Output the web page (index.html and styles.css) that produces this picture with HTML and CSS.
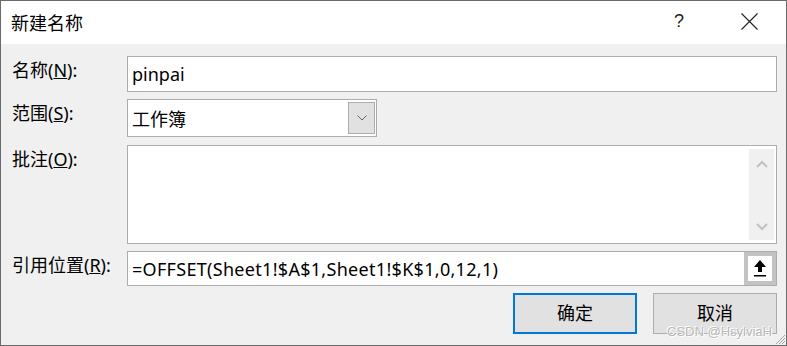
FILE: index.html
```html
<!DOCTYPE html>
<html lang="zh-CN">
<head>
    <meta charset="UTF-8">
    <title>新建名称</title>
    <link rel="stylesheet" href="styles.css">
</head>
<body>
    <div class="dialog">
        <div class="title-bar">
            <span class="title">新建名称</span>
            <span class="help">?</span>
            <span class="close">
                <svg width="17" height="17" viewBox="0 0 17 17"><path d="M0.5 0.5 L16.5 16.5 M16.5 0.5 L0.5 16.5" stroke="#222" stroke-width="1.1" fill="none"/></svg>
            </span>
        </div>

        <div class="content">
            <div class="row row-name">
                <label class="label">名称(<u>N</u>):</label>
                <div class="field">
                    <span class="value">pinpai</span>
                </div>
            </div>

            <div class="row row-scope">
                <label class="label">范围(<u>S</u>):</label>
                <div class="field select">
                    <span class="value">工作簿</span>
                    <span class="drop-btn">
                        <svg width="10" height="6" viewBox="0 0 10 6"><path d="M0.5 0.5 L5 5 L9.5 0.5" stroke="#666" stroke-width="1" fill="none"/></svg>
                    </span>
                </div>
            </div>

            <div class="row row-comment">
                <label class="label">批注(<u>O</u>):</label>
                <div class="field memo">
                    <span class="value"></span>
                    <div class="scrollbar">
                        <svg width="12" height="8" viewBox="0 0 12 8"><path d="M1 7 L6 2 L11 7" stroke="#c2c2c2" stroke-width="2" fill="none"/></svg>
                        <svg width="12" height="8" viewBox="0 0 12 8"><path d="M1 1 L6 6 L11 1" stroke="#c2c2c2" stroke-width="2" fill="none"/></svg>
                    </div>
                </div>
            </div>

            <div class="row row-ref">
                <label class="label">引用位置(<u>R</u>):</label>
                <div class="field ref">
                    <span class="value">=OFFSET(Sheet1!$A$1,Sheet1!$K$1,0,12,1)</span>
                    <span class="collapse-btn">
                        <svg width="14" height="18" viewBox="0 0 14 18">
                            <path d="M7 0 L13 7 L9 7 L9 12 L5 12 L5 7 L1 7 Z" fill="#000"/>
                            <rect x="1" y="15" width="12" height="1.5" fill="#000"/>
                        </svg>
                    </span>
                </div>
            </div>

            <div class="buttons">
                <button class="btn btn-default">确定</button>
                <button class="btn">取消</button>
            </div>
        </div>

        <span class="watermark">CSDN @HsylviaH</span>
        <svg class="grip" width="12" height="12" viewBox="0 0 12 12">
            <path d="M11 2 L2 11 M11 5 L5 11 M11 8 L8 11" stroke="#a8a8a8" stroke-width="1" fill="none"/>
        </svg>
    </div>
</body>
</html>
```

FILE: styles.css
```css
body {
    margin: 0;
    font-family: "Noto Sans", "Noto Sans CJK SC", sans-serif;
    background-color: #f0f0f0;
    color: #000;
}

.dialog {
    position: relative;
    width: 787px;
    height: 346px;
    box-sizing: border-box;
    border: 1px solid #6a6a6a;
    background-color: #f0f0f0;
    overflow: hidden;
}

.title-bar {
    height: 43px;
    background: #fff;
    display: flex;
    align-items: center;
    padding: 0 28px 0 10px;
}

.title {
    font-size: 18px;
    flex: 1;
    padding-bottom: 2px;
}

.help {
    font-size: 18px;
    font-family: "Liberation Sans", sans-serif;
    color: #222;
    margin-right: 57px;
    padding-bottom: 2px;
}

.close {
    display: flex;
    margin-bottom: 2px;
}

.content {
    padding: 12px 9px 0 11px;
    display: flex;
    flex-direction: column;
    gap: 7px;
}

.row {
    display: flex;
    align-items: flex-start;
}

.label {
    width: 115px;
    font-size: 18px;
    line-height: 22px;
    padding-top: 3px;
}

.field {
    flex: 1;
    background: #fff;
    border: 1px solid #adadad;
    display: flex;
    align-items: center;
    box-sizing: border-box;
}

.value {
    flex: 1;
    font-size: 18px;
    padding-left: 4px;
    white-space: nowrap;
}

.row-name .field {
    height: 36px;
}

.select {
    flex: 0 0 250px;
    height: 38px;
    padding: 2px 1px 2px 0;
    align-items: stretch;
}

.select .value {
    display: flex;
    align-items: center;
}

.drop-btn {
    width: 25px;
    background: #e1e1e1;
    border: 1px solid #adadad;
    display: flex;
    align-items: center;
    justify-content: center;
}

.row-comment {
    margin-top: 1px;
}

.memo {
    height: 99px;
    padding: 3px 2px 3px 0;
    align-items: stretch;
}

.scrollbar {
    width: 25px;
    background: #f0f0f0;
    display: flex;
    flex-direction: column;
    justify-content: space-between;
    align-items: center;
    padding: 11px 0 9px;
}

.ref {
    height: 35px;
    align-items: stretch;
}

.ref .value {
    display: flex;
    align-items: center;
    letter-spacing: 0.3px;
}

.collapse-btn {
    width: 32px;
    box-sizing: border-box;
    border: 4px solid #c3c3c3;
    background: #fff;
    display: flex;
    align-items: center;
    justify-content: center;
}

.buttons {
    display: flex;
    justify-content: flex-end;
    gap: 16px;
}

.btn {
    width: 124px;
    height: 41px;
    background: #e1e1e1;
    border: 1px solid #adadad;
    font-family: "Noto Sans", "Noto Sans CJK SC", sans-serif;
    font-size: 18px;
    color: #000;
    padding: 0 0 3px;
}

.btn-default {
    border: 2px solid #0078d7;
}

.watermark {
    position: absolute;
    right: 14px;
    bottom: 6px;
    font-family: "Liberation Sans", sans-serif;
    font-size: 13px;
    line-height: 15px;
    color: #b8b8b8;
    text-shadow: 1px 1px 0 #fff, -1px -1px 0 #fff;
}

.grip {
    position: absolute;
    right: 0;
    bottom: 0;
}
```
